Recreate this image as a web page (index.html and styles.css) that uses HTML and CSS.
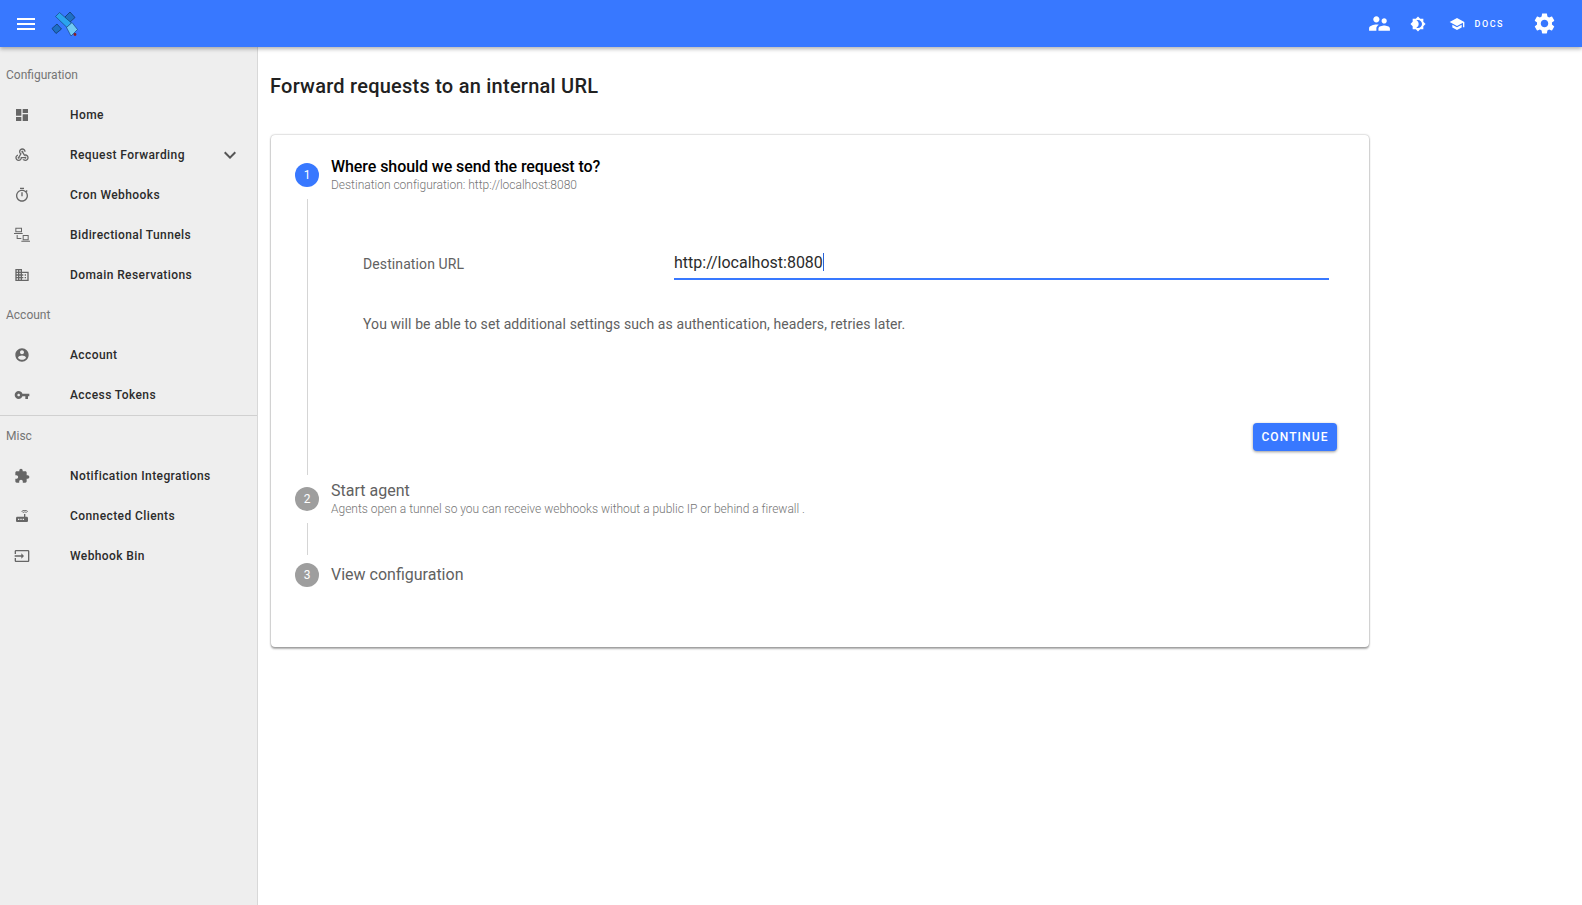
FILE: index.html
```html
<!DOCTYPE html>
<html lang="en">
<head>
<meta charset="utf-8">
<title>Forward requests</title>
<link rel="stylesheet" href="styles.css">
</head>
<body>
<header class="appbar">
  <svg class="ic-menu" viewBox="0 0 24 24"><path d="M3 18h18v-2H3v2zm0-5h18v-2H3v2zm0-7v2h18V6H3z"/></svg>
  <svg class="logo" viewBox="0 0 34 30">
    <polygon points="17,8 22,3 27,8.500 21,14" fill="#1e6fc4" stroke="#123a6e" stroke-width=".8"/>
    <polygon points="4,19.500 9,15 13.500,20 8,24.500" fill="#1e6fc4" stroke="#123a6e" stroke-width=".8"/>
    <polygon points="7.500,7.500 11.500,3.500 23.500,14 19,18.500" fill="#2ba4ee" stroke="#123a6e" stroke-width=".6"/>
    <polygon points="18.500,18.500 24,13.500 29.500,20.500 23,27" fill="#6fc9f4" stroke="#123a6e" stroke-width=".6"/>
    <circle cx="27" cy="25.500" r="1.400" fill="#8a1f1f"/>
  </svg>
  <div class="spacer"></div>
  <svg class="ic-people" viewBox="0 0 24 24"><path d="M16.500 12c1.380 0 2.490-1.120 2.490-2.500S17.880 7 16.500 7C15.120 7 14 8.120 14 9.500s1.120 2.500 2.500 2.500zM9 11c1.660 0 2.990-1.340 2.990-3S10.660 5 9 5C7.340 5 6 6.340 6 8s1.340 3 3 3zm7.500 3c-1.830 0-5.500.92-5.500 2.750V19h11v-2.250c0-1.830-3.670-2.750-5.500-2.750zM9 13c-2.330 0-7 1.170-7 3.500V19h7v-2.250c0-.85.33-2.340 2.370-3.470C10.500 13.100 9.660 13 9 13z"/></svg>
  <svg class="ic-bright" viewBox="0 0 24 24"><path d="M20 8.690V4h-4.690L12 .69 8.690 4H4v4.690L.69 12 4 15.310V20h4.690L12 23.310 15.310 20H20v-4.690L23.310 12 20 8.690zM12 18c-.89 0-1.740-.2-2.500-.55C11.560 16.500 13 14.420 13 12s-1.440-4.500-3.500-5.450C10.260 6.200 11.110 6 12 6c3.310 0 6 2.690 6 6s-2.690 6-6 6z"/></svg>
  <svg class="ic-school" viewBox="0 0 24 24"><path d="M5 13.180v4L12 21l7-3.820v-4L12 17l-7-3.820zM12 3L1 9l11 6 9-4.910V17h2V9L12 3z"/></svg>
  <span class="docs">DOCS</span>
  <svg class="ic-gear" viewBox="0 0 24 24"><path d="M19.140 12.940c.04-.3.06-.61.06-.94 0-.32-.02-.64-.07-.94l2.030-1.580c.18-.14.23-.41.12-.61l-1.920-3.320c-.12-.22-.37-.29-.59-.22l-2.390.96c-.5-.38-1.030-.7-1.620-.94l-.36-2.540c-.04-.24-.24-.41-.48-.41h-3.840c-.24 0-.43.17-.47.41l-.36 2.540c-.59.24-1.130.57-1.620.94l-2.390-.96c-.22-.08-.47 0-.59.22L2.740 8.870c-.12.21-.08.47.12.61l2.030 1.580c-.05.3-.09.63-.09.94s.02.64.07.94l-2.030 1.580c-.18.14-.23.41-.12.61l1.920 3.320c.12.22.37.29.59.22l2.390-.96c.5.38 1.030.7 1.620.94l.36 2.540c.05.24.24.41.48.41h3.840c.24 0 .44-.17.47-.41l.36-2.540c.59-.24 1.130-.56 1.620-.94l2.390.96c.22.08.47 0 .59-.22l1.920-3.320c.12-.22.07-.47-.12-.61l-2.010-1.580zM12 15.600c-1.980 0-3.600-1.620-3.600-3.600s1.620-3.600 3.600-3.600 3.600 1.620 3.600 3.600-1.620 3.600-3.600 3.600z"/></svg>
</header>
<div class="shell">
  <nav class="sidebar">
    <div class="group">Configuration</div>
    <a class="item"><svg class="ic" viewBox="0 0 24 24"><path d="M3 13h8V3H3v10zm0 8h8v-6H3v6zm10 0h8V11h-8v10zm0-18v6h8V3h-8z"/></svg><span>Home</span></a>
    <a class="item"><svg class="ic" viewBox="0 0 24 24"><path d="M10 15h5.880c.27-.31.67-.5 1.120-.5.83 0 1.500.67 1.500 1.500s-.67 1.500-1.500 1.500c-.44 0-.84-.19-1.120-.5H11.900c-.46 2.280-2.480 4-4.900 4-2.760 0-5-2.240-5-5 0-2.420 1.720-4.440 4-4.900v2.070C4.840 13.580 4 14.700 4 16c0 1.650 1.350 3 3 3s3-1.350 3-3v-1zm2.500-11c1.650 0 3 1.350 3 3h2c0-2.760-2.240-5-5-5s-5 2.240-5 5c0 1.430.6 2.710 1.550 3.620l-2.350 3.900c-.68.14-1.200.75-1.200 1.480 0 .83.67 1.500 1.500 1.500s1.500-.67 1.500-1.500c0-.16-.02-.31-.07-.45l3.380-5.630C10.490 9.610 9.500 8.420 9.500 7c0-1.650 1.350-3 3-3zm4.500 9c-.64 0-1.230.2-1.720.54l-3.050-5.070C11.530 8.350 11 7.740 11 7c0-.83.67-1.500 1.500-1.500S14 6.170 14 7c0 .15-.02.29-.06.43l2.190 3.650c.28-.05.57-.08.87-.08 2.760 0 5 2.240 5 5s-2.240 5-5 5c-1.850 0-3.470-1.010-4.330-2.500h2.670c.48.32 1.050.5 1.660.5 1.650 0 3-1.350 3-3s-1.350-3-3-3z"/></svg><span>Request Forwarding</span><svg class="chev" viewBox="0 0 24 24"><path d="M16.590 8.590L12 13.170 7.410 8.590 6 10l6 6 6-6z"/></svg></a>
    <a class="item"><svg class="ic" viewBox="0 0 24 24"><path d="M9 1h6v2H9zM19.030 7.390l1.420-1.420c-.43-.51-.9-.99-1.410-1.410l-1.420 1.420C16.070 4.740 14.120 4 12 4c-4.970 0-9 4.030-9 9s4.020 9 9 9 9-4.030 9-9c0-2.120-.74-4.070-1.970-5.610zM12 20c-3.870 0-7-3.130-7-7s3.130-7 7-7 7 3.130 7 7-3.130 7-7 7zM11 8h2v6h-2z"/></svg><span>Cron Webhooks</span></a>
    <a class="item"><svg class="ic" viewBox="0 0 24 24"><path fill-rule="evenodd" d="M2 1h10v7H2zM3.500 2.500v4h7v-4zM0 9h13v1.500H0zM4 12h1.500v4.500H11V18H4zM13 12h9v8h-9zM14.500 13.500v5h6v-5zM11 20.500h13V22H11z"/></svg><span>Bidirectional Tunnels</span></a>
    <a class="item"><svg class="ic" viewBox="0 0 24 24"><path d="M12 7V3H2v18h20V7H12zM6 19H4v-2h2v2zm0-4H4v-2h2v2zm0-4H4V9h2v2zm0-4H4V5h2v2zm4 12H8v-2h2v2zm0-4H8v-2h2v2zm0-4H8V9h2v2zm0-4H8V5h2v2zm10 12h-8v-2h2v-2h-2v-2h2v-2h-2V9h8v10zm-2-8h-2v2h2v-2zm0 4h-2v2h2v-2z"/></svg><span>Domain Reservations</span></a>
    <div class="group">Account</div>
    <a class="item"><svg class="ic" viewBox="0 0 24 24"><path d="M12 2C6.480 2 2 6.480 2 12s4.480 10 10 10 10-4.480 10-10S17.520 2 12 2zm0 3c1.660 0 3 1.340 3 3s-1.340 3-3 3-3-1.340-3-3 1.340-3 3-3zm0 14.200c-2.500 0-4.710-1.280-6-3.220.03-1.990 4-3.080 6-3.080 1.990 0 5.970 1.090 6 3.080-1.290 1.940-3.500 3.220-6 3.220z"/></svg><span>Account</span></a>
    <a class="item"><svg class="ic" viewBox="0 0 24 24"><path d="M12.650 10C11.830 7.670 9.610 6 7 6c-3.310 0-6 2.690-6 6s2.690 6 6 6c2.610 0 4.830-1.670 5.650-4H17v4h4v-4h2v-4H12.650zM7 14c-1.100 0-2-.9-2-2s.9-2 2-2 2 .9 2 2-.9 2-2 2z"/></svg><span>Access Tokens</span></a>
    <hr class="divider">
    <div class="group">Misc</div>
    <a class="item"><svg class="ic" viewBox="0 0 24 24"><path d="M20.500 11H19V7c0-1.100-.9-2-2-2h-4V3.500C13 2.120 11.880 1 10.500 1S8 2.120 8 3.500V5H4c-1.100 0-1.990.9-1.990 2v3.800H3.500c1.490 0 2.700 1.210 2.700 2.700s-1.210 2.700-2.700 2.700H2V20c0 1.100.9 2 2 2h3.800v-1.500c0-1.490 1.210-2.700 2.700-2.700 1.490 0 2.700 1.210 2.700 2.700V22H17c1.100 0 2-.9 2-2v-4h1.500c1.380 0 2.500-1.120 2.500-2.500S21.880 11 20.500 11z"/></svg><span>Notification Integrations</span></a>
    <a class="item"><svg class="ic" viewBox="0 0 24 24"><path d="M20.200 5.900l.8-.8C19.600 3.700 17.800 3 16 3s-3.600.7-5 2.100l.8.8C13 4.800 14.500 4.200 16 4.200s3 .6 4.200 1.700zm-.9.8c-.9-.9-2.100-1.400-3.300-1.400s-2.400.5-3.300 1.400l.8.8c.7-.7 1.600-1 2.500-1 .9 0 1.800.3 2.500 1l.8-.8zM19 13h-2V9h-2v4H5c-1.100 0-2 .9-2 2v4c0 1.100.9 2 2 2h14c1.100 0 2-.9 2-2v-4c0-1.100-.9-2-2-2zM8 18H6v-2h2v2zm3.500 0h-2v-2h2v2zm3.500 0h-2v-2h2v2z"/></svg><span>Connected Clients</span></a>
    <a class="item"><svg class="ic" viewBox="0 0 24 24"><path d="M21 3.010H3c-1.100 0-2 .9-2 2V9h2V4.990h18v14.030H3V15H1v4.010c0 1.100.9 1.980 2 1.980h18c1.100 0 2-.88 2-1.980v-14c0-1.110-.9-2-2-2zM11 16l4-4-4-4v3H1v2h10v3z"/></svg><span>Webhook Bin</span></a>
  </nav>
  <main class="main">
    <h1 class="title">Forward requests to an internal URL</h1>
    <section class="card">
      <div class="step">
        <div class="badge active">1</div>
        <div class="labels">
          <div class="step-title active">Where should we send the request to?</div>
          <div class="step-sub">Destination configuration: http://localhost:8080</div>
        </div>
      </div>
      <div class="content">
        <div class="form-row">
          <label class="field-label">Destination URL</label>
          <div class="input-box"><span class="input-value">http://localhost:8080</span><span class="caret"></span></div>
        </div>
        <p class="help">You will be able to set additional settings such as authentication, headers, retries later.</p>
        <div class="actions"><button class="btn">CONTINUE</button></div>
      </div>
      <div class="step step-2">
        <div class="badge">2</div>
        <div class="labels">
          <div class="step-title">Start agent</div>
          <div class="step-sub">Agents open a tunnel so you can receive webhooks without a public IP or behind a firewall .</div>
        </div>
      </div>
      <div class="connector"></div>
      <div class="step step-3">
        <div class="badge">3</div>
        <div class="labels"><div class="step-title">View configuration</div></div>
      </div>
    </section>
  </main>
</div>
</body>
</html>
```
FILE: styles.css
```css
* { box-sizing: border-box; }
html, body { margin: 0; height: 100%; }
body { font-family: Roboto, "Liberation Sans", sans-serif; background: #fff; overflow: hidden; }
.appbar { position: relative; z-index: 2; height: 47px; background: #3878ff; display: flex; align-items: center; padding-left: 14px; box-shadow: 0 2px 4px rgba(0,0,0,.3); fill: #fff; }
.ic-menu { width: 24px; height: 24px; }
.logo { width: 34px; height: 30px; margin-left: 10px; }
.spacer { flex: 1; }
.ic-people { width: 25px; height: 25px; }
.ic-bright { width: 16px; height: 16px; margin-left: 18px; }
.ic-school { width: 16px; height: 16px; margin-left: 23px; }
.docs { color: #fff; font-size: 9px; font-weight: 500; letter-spacing: 1.500px; margin-left: 10px; }
.ic-gear { width: 25px; height: 25px; margin-left: 28px; margin-right: 25px; }
.shell { display: flex; height: calc(100vh - 47px); }
.sidebar { width: 258px; flex: none; background: #eee; border-right: 1px solid #d8d8d8; padding-top: 8px; }
.group { height: 40px; padding-left: 6px; display: flex; align-items: center; font-size: 12px; color: #757575; }
.item { height: 40px; display: flex; align-items: center; font-size: 12px; font-weight: 500; letter-spacing: .41px; color: #2b2b2b; }
.ic { width: 16px; height: 16px; margin-left: 14px; margin-right: 40px; fill: #666; flex: none; }
.chev { width: 24px; height: 24px; fill: #555; margin-left: auto; margin-right: 15px; }
.divider { height: 1px; border: 0; margin: 0; background: #d0d0d0; }
.main { flex: 1; padding: 0 12px; min-width: 0; }
.title { margin: 27px 0 0; font-size: 20px; line-height: 24px; font-weight: 500; letter-spacing: .24px; color: #212121; }
.card { margin: 37px 0 0 1px; width: 1098px; height: 512px; border-radius: 4px; background: #fff; box-shadow: 0 0 2px rgba(0,0,0,.4), 0 2px 2px rgba(0,0,0,.3); padding-top: 22px; }
.step { display: flex; align-items: flex-start; padding-left: 24px; }
.badge { width: 24px; height: 24px; border-radius: 50%; background: #9e9e9e; color: #fff; font-size: 12px; display: flex; align-items: center; justify-content: center; margin-top: 6px; flex: none; }
.badge.active { background: #3878ff; }
.labels { margin-left: 12px; }
.step-title { font-size: 16px; line-height: 20px; color: #616161; }
.step-title.active { color: #000; font-weight: 500; letter-spacing: -.07px; }
.step-sub { font-size: 12px; line-height: 16px; font-weight: 300; color: #757575; letter-spacing: -.01px; }
.content { margin-left: 36px; height: 276px; margin-top: 6px; border-left: 1px solid #d5d5d5; padding-left: 55px; padding-right: 32px; display: flex; flex-direction: column; }
.form-row { display: flex; align-items: center; margin-top: 45px; height: 36px; }
.field-label { width: 311px; padding-top: 3px; font-size: 14px; color: #616161; letter-spacing: .1px; flex: none; }
.input-box { width: 655px; height: 36px; padding-top: 2px; border-bottom: 2px solid #3878ff; display: flex; align-items: center; }
.input-value { font-size: 16px; color: #2b2b2b; }
.caret { width: 1px; height: 18px; background: #2962d9; }
.help { margin: 34px 0 0; font-size: 14px; line-height: 20px; color: #616161; letter-spacing: .09px; }
.actions { margin-top: 89px; display: flex; justify-content: flex-end; }
.btn { width: 84px; height: 28px; border: 0; border-radius: 4px; background: #3878ff; color: #fff; font: 500 12px Roboto, sans-serif; letter-spacing: 1.100px; box-shadow: 0 1px 3px rgba(0,0,0,.4); padding: 0; }
.step-2 { margin-top: 6px; }
.connector { margin-left: 36px; margin-top: 6px; height: 32px; border-left: 1px solid #d5d5d5; }
.step-3 { margin-top: 8px; align-items: center; }
.step-3 .badge { margin-top: 0; }
```
